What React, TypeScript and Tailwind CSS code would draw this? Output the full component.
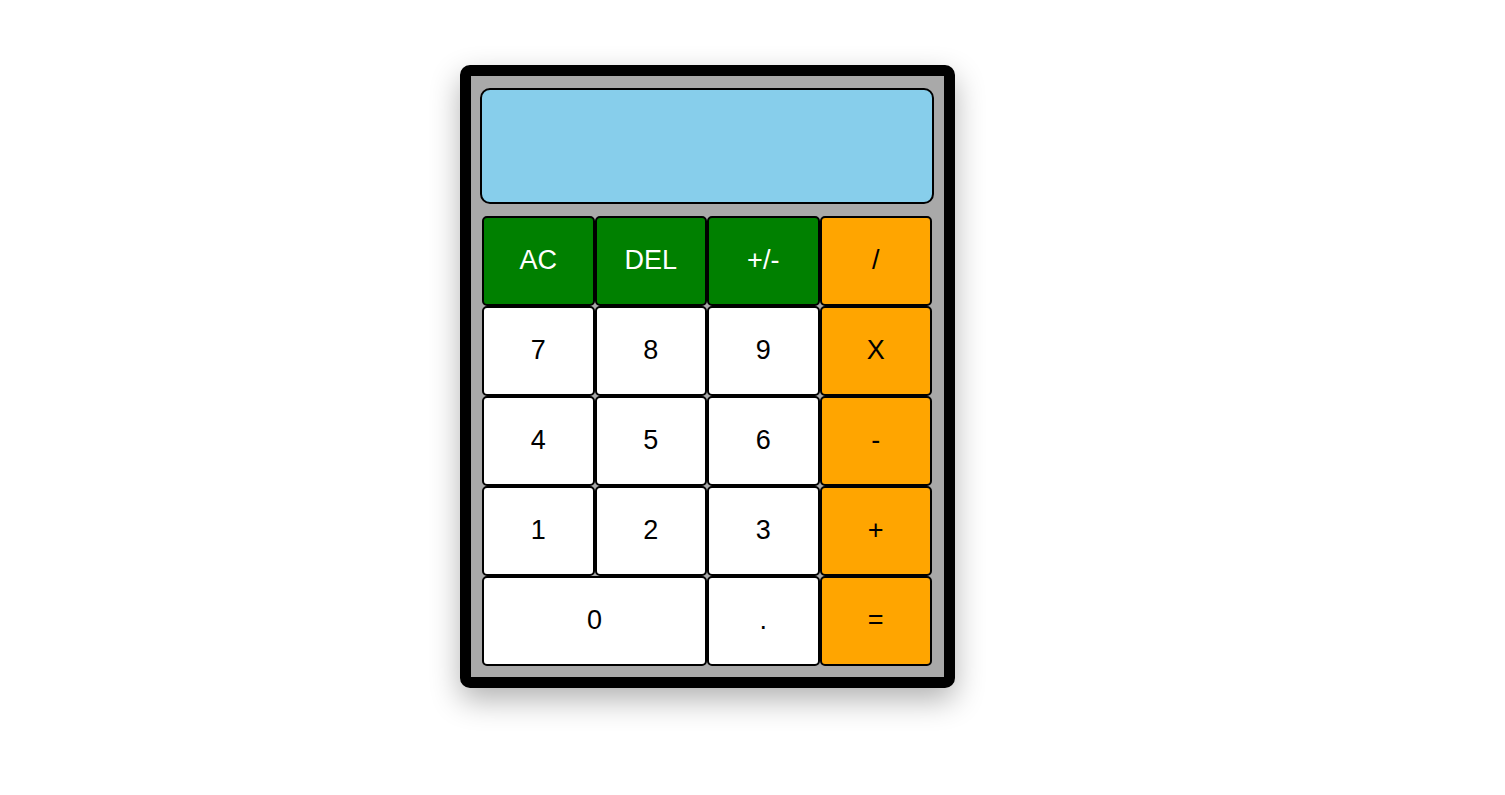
import React from "react";

type Key = { label: string; kind: "fn" | "num" | "op"; wide?: boolean };

const keys: Key[] = [
  { label: "AC", kind: "fn" },
  { label: "DEL", kind: "fn" },
  { label: "+/-", kind: "fn" },
  { label: "/", kind: "op" },
  { label: "7", kind: "num" },
  { label: "8", kind: "num" },
  { label: "9", kind: "num" },
  { label: "X", kind: "op" },
  { label: "4", kind: "num" },
  { label: "5", kind: "num" },
  { label: "6", kind: "num" },
  { label: "-", kind: "op" },
  { label: "1", kind: "num" },
  { label: "2", kind: "num" },
  { label: "3", kind: "num" },
  { label: "+", kind: "op" },
  { label: "0", kind: "num", wide: true },
  { label: ".", kind: "num" },
  { label: "=", kind: "op" },
];

const kindClass: Record<Key["kind"], string> = {
  fn: "bg-[#008000] text-white",
  num: "bg-white text-black",
  op: "bg-[#ffa500] text-black",
};

export default function App() {
  return (
    <div
      className="min-h-screen bg-white pt-[65px] pl-[460px]"
      style={{ fontFamily: '"Liberation Sans", Arial, sans-serif' }}
    >
      <div className="w-[495px] border-[11px] border-black rounded-[10px] bg-[#a9a9a9] shadow-[0_12px_30px_rgba(0,0,0,0.3)] pt-[12px] pb-[11px] flex flex-col">
        <div className="ml-[9px] w-[454px] h-[116px] bg-[#87ceeb] border-2 border-black rounded-[10px]" />
        <div className="ml-[11px] mt-[12px] w-[450px] grid grid-cols-4 auto-rows-[90px]">
          {keys.map((k) => (
            <button
              key={k.label}
              className={`${kindClass[k.kind]} ${
                k.wide ? "col-span-2" : ""
              } border-2 border-black rounded-[5px] text-[27px] pb-[2px] flex items-center justify-center`}
            >
              {k.label}
            </button>
          ))}
        </div>
      </div>
    </div>
  );
}
